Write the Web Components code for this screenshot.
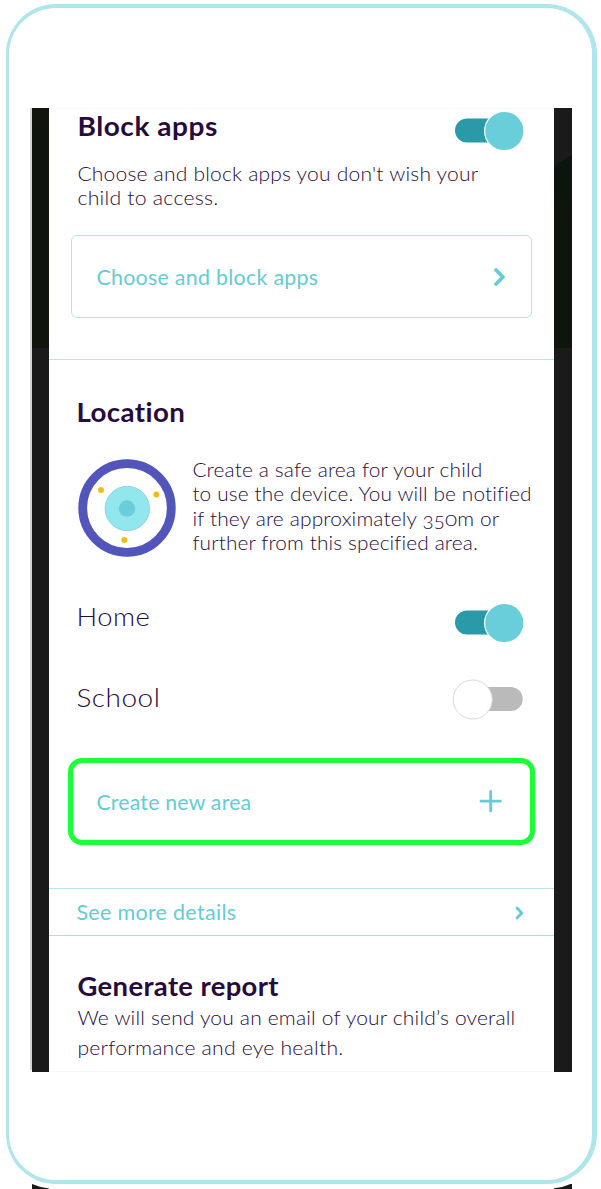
<!DOCTYPE html>
<html lang="en">
<head>
<meta charset="utf-8">
<title>Parental controls</title>
<style>
html,body{margin:0;background:#fff}
body{width:601px;height:1189px;overflow:hidden;font-family:Lato,"Open Sans",sans-serif;color:#260b3d}
</style>
</head>
<body>
<phone-frame>
  <app-screen>
    <settings-section style="height:251px">
      <settings-row style="padding:2px 31px 0 29px;height:53px">
        <text-line kind="title" width="138.5">Block apps</text-line>
        <toggle-switch on style="margin-top:1px"></toggle-switch>
      </settings-row>
      <div style="padding-left:29px;height:74px">
        <text-line width="399">Choose and block apps you don't wish your</text-line>
        <text-line width="139">child to access.</text-line>
      </div>
      <action-box style="margin:0 22px"><text-line kind="link" width="220">Choose and block apps</text-line><line-icon slot="icon" name="chevron"></line-icon></action-box>
    </settings-section>
    <settings-section style="height:528px;border-top:1px solid #b3e5eb">
      <settings-row style="padding:36px 28px 0;height:63px"><text-line kind="title" width="107.5">Location</text-line></settings-row>
      <settings-row style="padding:36px 20px 0 29px;height:177px;justify-content:flex-start">
        <zone-badge></zone-badge>
        <div style="padding-left:17px;margin-top:-2px">
          <text-line width="288">Create a safe area for your child</text-line>
          <text-line width="337">to use the device. You will be notified</text-line>
          <text-line width="305">if they are approximately <old-digits digit="3">3</old-digits><old-digits digit="5">5</old-digits><old-digits digit="0">0</old-digits>m or</text-line>
          <text-line width="283">further from this specified area.</text-line>
        </div>
      </settings-row>
      <settings-row style="padding:0 31px 0 28px;height:76px"><text-line kind="place" width="72">Home</text-line><toggle-switch on style="margin-top:3px"></toggle-switch></settings-row>
      <settings-row style="padding:0 31px 0 28px;height:82px"><text-line kind="place" width="82" style="margin-top:5px">School</text-line><toggle-switch style="margin-top:3px"></toggle-switch></settings-row>
      <action-box highlighted style="margin:0 19px"><text-line kind="link" width="153">Create new area</text-line><line-icon slot="icon" name="plus"></line-icon></action-box>
    </settings-section>
    <settings-section style="height:46px;border-top:1px solid #b7e3e9;border-bottom:1px solid #a9e0e7">
      <settings-row style="padding:9px 30px 0 28px"><text-line kind="link" width="158">See more details</text-line><line-icon name="small" style="margin-top:7px"></line-icon></settings-row>
    </settings-section>
    <settings-section style="height:136px">
      <div style="padding:34px 29px 0">
        <text-line kind="title" width="199.5">Generate report</text-line>
        <text-line kind="wide" width="436" style="margin-top:1px">We will send you an email of your child’s overall</text-line>
        <text-line kind="wide" width="264">performance and eye health.</text-line>
      </div>
    </settings-section>
  </app-screen>
</phone-frame>
<phone-shadow></phone-shadow>
<script>
class View extends HTMLElement{
  constructor(){super();this.attachShadow({mode:'open'})}
  connectedCallback(){this.shadowRoot.innerHTML=this.view()}
}
customElements.define('phone-frame',class extends View{view(){return `<style>
:host{display:block;box-sizing:border-box;width:591px;height:1180px;margin:4px 0 0 6px;padding:100px 0 0 21px;border:solid #afe6eb;border-width:4px 5px 4px 3px;border-radius:50px}
</style><slot></slot>`}});
customElements.define('app-screen',class extends View{view(){return `<style>
:host{display:grid;grid-template-columns:2px 17px 505px 18px;width:542px;height:964px}
.edge{background:#d2d4d5;margin-bottom:2px}
.bar{background:linear-gradient(#0f150d 0 240px,#1a1a1a 240px)}
.right{background:linear-gradient(149deg,#1a1a1a 0 49px,transparent 50px) 0 0/18px 60px no-repeat,linear-gradient(#0b150d 0 85px,#0f150d 105px 240px,#1a1a1a 240px)}
main{box-sizing:border-box;min-width:0;box-shadow:inset 0 1px #f7f7f7,inset 0 -1px #f5f5f5}
</style><div class="edge"></div><div class="bar"></div><main><slot></slot></main><div class="bar right"></div>`}});
customElements.define('settings-section',class extends View{view(){return `<style>:host{display:block}</style><slot></slot>`}});
customElements.define('settings-row',class extends View{view(){return `<style>:host{display:flex;box-sizing:border-box;justify-content:space-between;align-items:flex-start}</style><slot></slot>`}});
customElements.define('action-box',class extends View{view(){return `<style>
:host{display:flex;box-sizing:border-box;height:83px;padding:0 25px;align-items:center;justify-content:space-between;border:1px solid #b0e5eb;border-radius:6px}
:host([highlighted]){height:87px;padding:0 28px 0 24px;border:5px solid #1bff39;border-radius:14px}
</style><slot></slot><slot name="icon"></slot>`}});
customElements.define('line-icon',class extends View{view(){
  const art={
    chevron:'<svg width="13" height="20"><path d="M3 3l7 7-7 7" stroke-width="3.8"/></svg>',
    small:'<svg width="10" height="16"><path d="M3 3l4.8 5-4.8 5" stroke-width="2.8"/></svg>',
    plus:'<svg width="24" height="24" style="margin-top:-2px"><path d="M12.7 2.5v19.4M3 12.2h19.4" stroke-width="2.8"/></svg>'};
  return `<style>:host{display:block;line-height:0}svg{display:block;fill:none;stroke:#65cbd7;stroke-linecap:round;stroke-linejoin:round}</style>${art[this.getAttribute('name')]}`}});
customElements.define('toggle-switch',class extends View{view(){
  const art=this.hasAttribute('on')
   ?'<rect x="2" y="7.5" width="66" height="24" rx="12" fill="#2b9aa8"/><circle cx="51.3" cy="20" r="19.7" fill="#69ced9" stroke="#fff" stroke-width="1.2"/>'
   :'<rect x="8" y="8" width="61.7" height="24" rx="12" fill="#bababa"/><circle cx="19.7" cy="20.5" r="19.5" fill="#fff" stroke="#dadada" stroke-width="1"/>';
  return `<style>:host{display:block}svg{display:block;overflow:visible}</style><svg width="71" height="41" style="margin-right:-1px">${art}</svg>`}});
customElements.define('zone-badge',class extends View{view(){return `<style>:host{display:block;flex:none}svg{display:block}</style>
<svg width="98" height="98"><circle cx="49" cy="49" r="44.3" fill="#fff" stroke="#5256bb" stroke-width="8.8"/><circle cx="49.3" cy="49.5" r="22.2" fill="#92e7ef" stroke="#78d3dc" stroke-width=".8"/><circle cx="49" cy="49.5" r="8.3" fill="#69ced9"/><g fill="#f5bd14"><circle cx="23" cy="31" r="3"/><circle cx="78.3" cy="35.6" r="3"/><circle cx="46.3" cy="81" r="3"/></g></svg>`}});
customElements.define('phone-shadow',class extends View{view(){return `<style>:host{display:block;height:5px}svg{display:block}</style>
<svg width="601" height="5" fill="#1a1a1a"><path d="M32 0q8 3.5 17 4.5v.5H32zM554 4.3q10-1 18-5V5h-18z"/></svg>`}});
customElements.define('old-digits',class extends View{view(){return `<style>
:host{display:inline-block;font-size:18.5px;line-height:0;transform:translateY(3px)}
:host([digit="0"]){font-size:20.3px;transform:scaleY(.76);transform-origin:50% 7px}
</style><slot></slot>`}});
/* A single line of copy, widened and tracked so that it fills its measure. */
customElements.define('text-line',class extends View{
  view(){return `<style>
:host{display:block;white-space:nowrap;font-size:20.3px;font-weight:300;line-height:24.4px}
:host([kind=title]){font-size:26px;font-weight:700;line-height:32px}
:host([kind=place]){font-size:26px;line-height:32px}
:host([kind=link]){font-weight:400;color:#65cbd7;padding-top:2px}
:host([kind=wide]){line-height:29.5px}
span{display:inline-block;transform-origin:0 50%}
</style><span><slot></slot></span>`}
  connectedCallback(){
    super.connectedCallback();
    const span=this.shadowRoot.querySelector('span');
    const target=+this.getAttribute('width')+2;
    const natural=span.getBoundingClientRect().width;
    const stretch=1+(target/natural-1)*.65;
    span.style.letterSpacing=(target/stretch-natural)/this.textContent.length+'px';
    span.style.transform=`translateX(-.6px) scaleX(${stretch})`;
  }
});
</script>
</body>
</html>
